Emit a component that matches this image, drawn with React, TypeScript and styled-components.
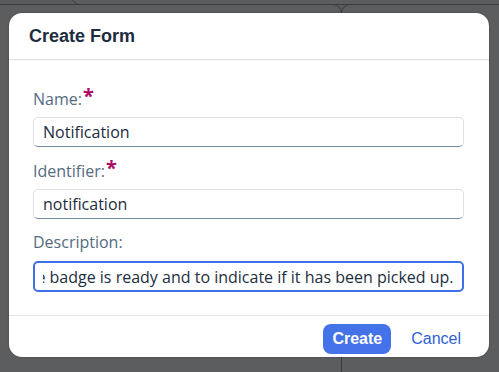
import React, { useLayoutEffect, useRef } from 'react';
import styled, { createGlobalStyle } from 'styled-components';

const GlobalStyle = createGlobalStyle`
  html, body {
    margin: 0;
    padding: 0;
    background: #5a5b5d;
  }
  * {
    box-sizing: border-box;
  }
`;

const Backdrop = styled.div`
  position: relative;
  width: 499px;
  height: 372px;
  overflow: hidden;
  background: #5a5b5d;
  padding: 13px 10px 15px 9px;
`;

// panels of the page under the dialog, only their edges show
const Panel = styled.div<{ left: number; top: number; width: number; height: number }>`
  position: absolute;
  left: ${p => p.left}px;
  top: ${p => p.top}px;
  width: ${p => p.width}px;
  height: ${p => p.height}px;
  border: 1px solid #3b3c3e;
  border-radius: 9px;
  background: #5c5d5f;
`;

const Dialog = styled.div`
  position: relative;
  z-index: 1;
  width: 480px;
  height: 344px;
  background: #fff;
  border-radius: 13px;
  display: flex;
  flex-direction: column;
  overflow: hidden;
  box-shadow: 0 0 2px rgba(0, 0, 0, 0.35);
`;

const Header = styled.div`
  height: 47px;
  flex-shrink: 0;
  display: flex;
  align-items: center;
  padding: 1px 20px 0;
  border-bottom: 1px solid #e2e4e7;
  box-shadow: 0 1px 1px rgba(0, 0, 0, 0.04);
`;

const Title = styled.h1`
  margin: 0;
  font-family: 'Liberation Sans', Arial, sans-serif;
  font-weight: 700;
  font-size: 18px;
  color: #1d2d3e;
`;

const Content = styled.div`
  flex: 1;
  padding: 27px 25px 0 24px;
  display: flex;
  flex-direction: column;
`;

const Field = styled.div`
  display: flex;
  flex-direction: column;
  margin-bottom: 12px;
`;

const Label = styled.label`
  font-family: 'Open Sans', 'Noto Sans', sans-serif;
  font-size: 16px;
  color: #556b82;
  height: 22px;
  line-height: 22px;
  margin-bottom: 8px;
  white-space: nowrap;
`;

const Required = styled.span`
  position: relative;
  top: -2px;
  color: #aa0a5f;
  font-weight: 700;
  font-size: 20px;
  margin-left: 1px;
`;

const Input = styled.input<{ focused?: boolean }>`
  width: 100%;
  height: ${p => (p.focused ? '31px' : '30px')};
  font-family: 'Open Sans', 'Noto Sans', sans-serif;
  font-size: 16px;
  color: #1d2d3e;
  caret-color: #1d2d3e;
  background: #fff;
  border-radius: 5px;
  outline: none;
  padding: 0 ${p => (p.focused ? '8px' : '9px')};
  border: ${p => (p.focused ? '2px solid #3e6ee8' : '1px solid #dde1e6')};
  border-bottom: ${p => (p.focused ? '2px solid #3e6ee8' : '1px solid #758ca4')};
`;

const Footer = styled.div`
  height: 42px;
  flex-shrink: 0;
  border-top: 1px solid #e2e4e7;
  display: flex;
  align-items: center;
  justify-content: flex-end;
  gap: 12px;
  padding: 5px 20px 0 0;
`;

const Button = styled.button<{ primary?: boolean }>`
  height: 30px;
  border: none;
  border-radius: 8px;
  font-family: 'Liberation Sans', Arial, sans-serif;
  font-size: 16px;
  cursor: pointer;
  padding: 0 ${p => (p.primary ? '9px' : '8px')};
  background: ${p => (p.primary ? '#4472e8' : 'transparent')};
  color: ${p => (p.primary ? '#fff' : '#2e5fd6')};
  font-weight: ${p => (p.primary ? 700 : 400)};
`;

const description =
  'Used to notify the owner that the badge is ready and to indicate if it has been picked up.';

export default function App() {
  const descRef = useRef<HTMLInputElement>(null);

  useLayoutEffect(() => {
    const el = descRef.current;
    if (!el) return;
    el.focus();
    el.setSelectionRange(description.length, description.length);
    el.scrollLeft = el.scrollWidth;
  }, []);

  return (
    <>
      <GlobalStyle />
      <Backdrop>
        <Panel left={71} top={-20} width={460} height={25} />
        <Panel left={-20} top={4} width={362} height={400} />
        <Panel left={341} top={4} width={200} height={400} />
        <Dialog>
          <Header>
            <Title>Create Form</Title>
          </Header>
          <Content>
            <Field>
              <Label>
                Name:<Required>*</Required>
              </Label>
              <Input readOnly value="Notification" />
            </Field>
            <Field>
              <Label>
                Identifier:<Required>*</Required>
              </Label>
              <Input readOnly value="notification" />
            </Field>
            <Field>
              <Label>Description:</Label>
              <Input ref={descRef} focused defaultValue={description} />
            </Field>
          </Content>
          <Footer>
            <Button primary>Create</Button>
            <Button>Cancel</Button>
          </Footer>
        </Dialog>
      </Backdrop>
    </>
  );
}
